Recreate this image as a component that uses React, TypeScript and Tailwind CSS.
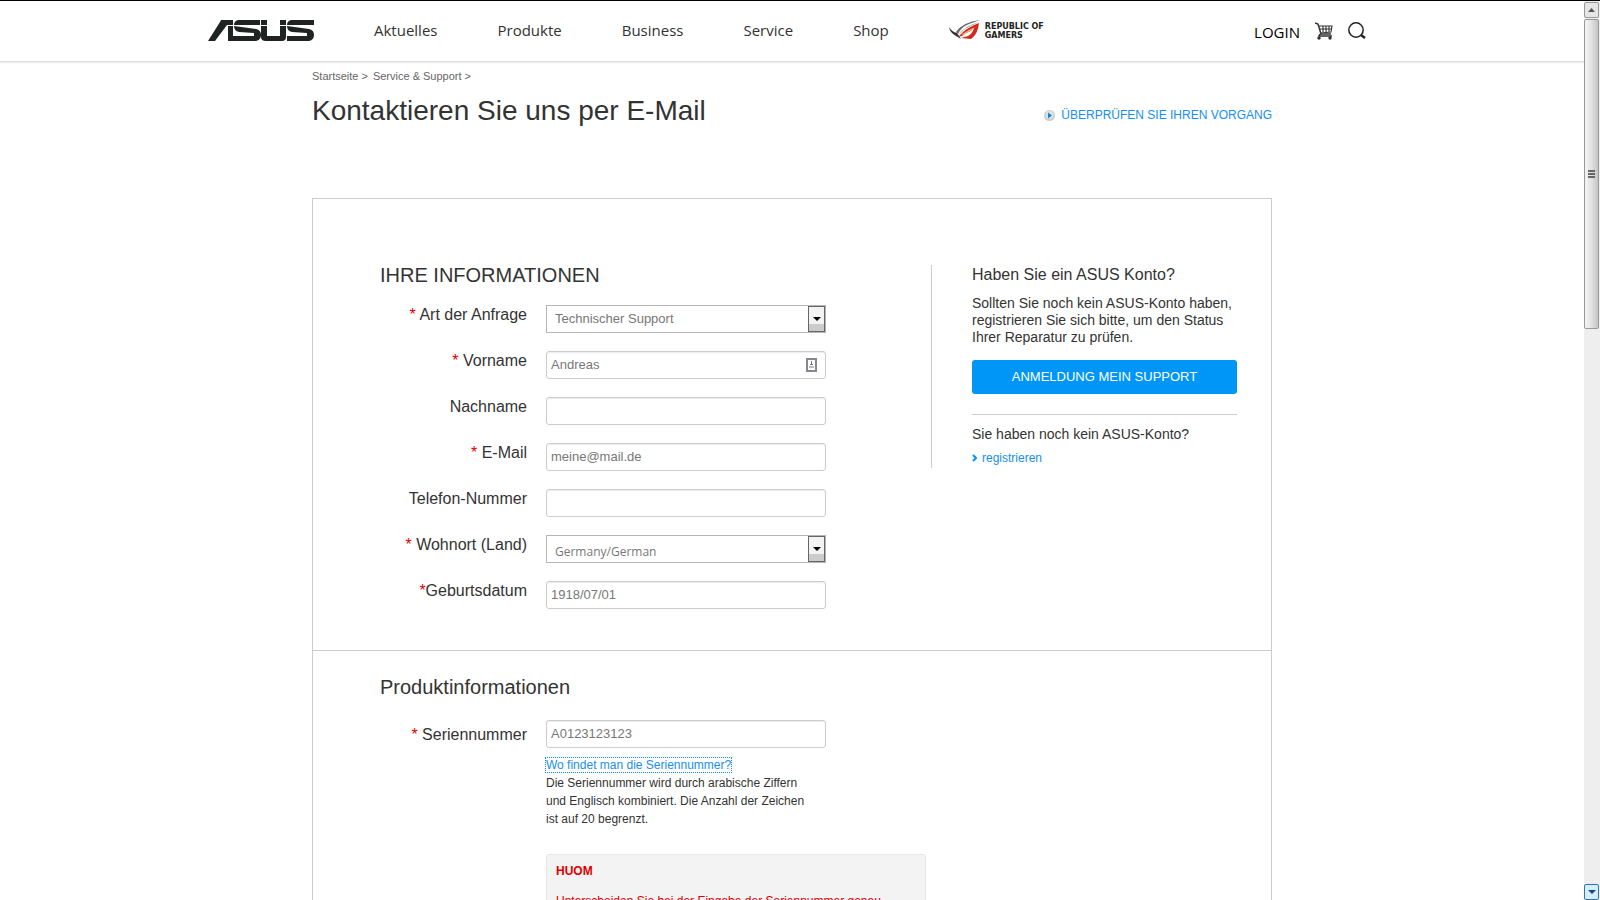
import type { ReactNode } from 'react';

const navLinks = ['Aktuelles', 'Produkte', 'Business', 'Service', 'Shop'];

const AsusLogo = () => (
  <svg width="106" height="21" viewBox="0 0 106 21" fill="#1f2322" role="img" aria-label="ASUS">
    <path d="M13 0H25V5H19L7 21H0L12 2Z" />
    <path d="M20 6H25V21H20Z" />
    <path d="M30 0H52V5H26Q26 1 30 0Z" />
    <path d="M26 6L48 9Q53 10 53 15Q53 20 48 21H25V16H46V13L31 12Q26 11 26 6Z" />
    <path d="M53 0H59V5H53ZM53 6H59V16H72V6H78V17Q78 21 74 21H58Q53 21 53 17Z" />
    <path d="M72 0H78V5H72Z" />
    <path d="M83 0H106V5H79Q79 1 83 0Z" />
    <path d="M79 6L101 9Q106 10 106 15Q106 20 101 21H79V16H99V13L84 12Q79 11 79 6Z" />
  </svg>
);

const RogLogo = () => (
  <svg width="32" height="21" viewBox="0 0 32 21" aria-hidden="true">
    <path d="M0 7Q3 12 8 13L12 19L7 16Q1 13 0 7Z" fill="#333" />
    <path d="M7 12Q14 2 31 0L20 4Q12 7 9 14Z" fill="#666" />
    <path d="M9 15Q15 6 30 2L16 9Z" fill="#aaa" />
    <path d="M9 17Q18 7 30 3Q29 14 22 19L12 18L19 16Q24 13 25 8Q18 10 13 16Z" fill="#d3281c" />
    <path d="M13 14L26 7L22 11L14 15Z" fill="#e8a06a" />
  </svg>
);

const CartIcon = () => (
  <svg width="18" height="18" viewBox="0 0 18 18" fill="none" stroke="#333" aria-hidden="true">
    <path d="M0 1L3 2L6 12H16M5 12L4 14H17" strokeWidth="1.5" />
    <path d="M4 4H17L16 10L6 11M5 7H16M8 4V10M11 4V10M14 4V10" strokeWidth="1.1" />
    <circle cx="4" cy="16" r="1.7" fill="#333" stroke="none" />
    <circle cx="15" cy="16" r="1.7" fill="#333" stroke="none" />
  </svg>
);

const SearchIcon = () => (
  <svg width="18" height="18" viewBox="0 0 18 18" fill="none" stroke="#222" aria-hidden="true">
    <circle cx="8" cy="8" r="7.2" strokeWidth="1.5" />
    <path d="M13 13L17 16" strokeWidth="2.5" />
  </svg>
);

const labelClasses = 'w-[147px] shrink-0 text-right text-base leading-5';
const inputClasses =
  'block h-7 w-[280px] rounded-[3px] border border-[#ccc] px-1 pb-0.5 text-[13px] text-[#777] shadow-[inset_0_1px_1px_rgba(0,0,0,0.08)] outline-none';

type RowProps = {
  id: string;
  label: string;
  required?: boolean;
  tight?: boolean;
  low?: boolean;
  children: ReactNode;
};

const Row = ({ id, label, required, tight, low, children }: RowProps) => (
  <div className="flex gap-[19px]">
    <label htmlFor={id} className={`${labelClasses} ${low ? 'pt-[5px]' : ''}`}>
      {required && <span className="text-[#d00]">*{tight ? '' : ' '}</span>}
      {label}
    </label>
    {children}
  </div>
);

const Select = ({ id, option, className }: { id: string; option: string; className: string }) => (
  <div className="relative h-7 w-[280px]">
    <select
      id={id}
      className={`block h-7 w-full appearance-none border border-[#b5b5b5] bg-white px-2 text-[#777] outline-none ${className}`}
    >
      <option>{option}</option>
    </select>
    <span className="pointer-events-none absolute top-px right-px flex h-[26px] w-[17px] items-center justify-center border border-[#666] bg-linear-to-b from-[#f3f3f3] from-70% to-[#ccc] to-70%">
      <svg width="8" height="4" viewBox="0 0 8 4" aria-hidden="true">
        <path d="M0 0H8L4 4Z" />
      </svg>
    </span>
  </div>
);

const Header = () => (
  <header className="h-[62px] border-t border-b border-t-black border-b-[#ddd] shadow-[0_1px_1px_#eee]">
    <div className="mx-auto flex h-[59px] w-full max-w-[1168px] items-center font-['Open_Sans',sans-serif] text-[15px]">
      <a href="#" className="mr-[60px]">
        <AsusLogo />
      </a>
      <nav className="flex items-center gap-[60px]">
        {navLinks.map((link) => (
          <a key={link} href="#">
            {link}
          </a>
        ))}
        <a href="#" className="flex items-center gap-1">
          <RogLogo />
          <span className="font-['DejaVu_Sans',sans-serif] text-[8px] leading-[9px] font-bold text-[#222]">
            REPUBLIC OF
            <br />
            GAMERS
          </span>
        </a>
      </nav>
      <div className="mr-[10px] ml-auto flex items-center gap-[15px]">
        <a href="#" className="pt-[3px] text-black">
          LOGIN
        </a>
        <a href="#" aria-label="Warenkorb">
          <CartIcon />
        </a>
        <button type="button" aria-label="Suche">
          <SearchIcon />
        </button>
      </div>
    </div>
  </header>
);

const AccountPanel = () => (
  <aside className="mt-[66px] h-[203px] w-[306px] border-l border-[#ccc] pl-10">
    <h2 className="text-base leading-5">Haben Sie ein ASUS Konto?</h2>
    <p className="mt-[10px] text-sm leading-[17px]">
      Sollten Sie noch kein ASUS-Konto haben,
      <br />
      registrieren Sie sich bitte, um den Status
      <br />
      Ihrer Reparatur zu prüfen.
    </p>
    <button type="button" className="mt-[14px] h-[34px] w-full rounded-[3px] bg-[#0096f7] text-[13px] text-white">
      ANMELDUNG MEIN SUPPORT
    </button>
    <p className="mt-5 border-t border-[#ccc] pt-[9px] text-sm leading-5">Sie haben noch kein ASUS-Konto?</p>
    <a href="#" className="mt-[6px] flex items-center gap-[5px] text-xs leading-4 text-[#1590ee]">
      <svg width="5" height="8" viewBox="0 0 5 8" fill="none" stroke="#0096f7" strokeWidth="2" aria-hidden="true">
        <path d="M1 1L4 4L1 7" />
      </svg>
      registrieren
    </a>
  </aside>
);

const Scrollbar = () => (
  <div className="flex w-4 shrink-0 flex-col border-t border-black bg-[#eee] pt-px pr-px" aria-hidden="true">
    <div className="flex h-4 items-center justify-center rounded-xs border border-[#999] bg-[#e5e5e5]">
      <svg width="7" height="4" viewBox="0 0 7 4" fill="#555">
        <path d="M0 4L3.5 0L7 4Z" />
      </svg>
    </div>
    <div className="mt-px flex h-[310px] flex-col items-center justify-center gap-px rounded-xs border border-[#999] bg-linear-to-r from-[#f5f5f5] via-[#e4e4e4] via-45% to-[#c4c4c4]">
      <span className="h-0.5 w-[7px] bg-[#666]" />
      <span className="h-0.5 w-[7px] bg-[#666]" />
      <span className="h-0.5 w-[7px] bg-[#666]" />
    </div>
    <div className="mt-auto flex h-4 items-center justify-center rounded-xs border border-[#3372b8] bg-[#d3effc]">
      <svg width="8" height="4" viewBox="0 0 8 4" fill="#1d4577">
        <path d="M0 0H8L4 4Z" />
      </svg>
    </div>
  </div>
);

export default function App() {
  return (
    <div className="flex h-screen overflow-hidden bg-white font-['Liberation_Sans',Arial,sans-serif] text-[#333]">
      <div className="min-w-0 flex-1 overflow-hidden">
        <Header />
        <main className="mx-auto w-full max-w-[960px]">
          <nav className="flex gap-[3px] pt-[7px] text-[11px] leading-[14px] text-[#666]">
            <a href="#">Startseite</a>
            <span>&gt;</span>
            <a href="#" className="ml-0.5">
              Service &amp; Support
            </a>
            <span>&gt;</span>
          </nav>
          <div className="mt-3 flex items-center justify-between">
            <h1 className="text-[28px] leading-8">Kontaktieren Sie uns per E-Mail</h1>
            <a href="#" className="flex items-center gap-[6px] pt-2 text-xs text-[#1590ee]">
              <svg width="11" height="11" viewBox="0 0 11 11" aria-hidden="true">
                <circle cx="5.5" cy="5.5" r="5.5" fill="#ccc" />
                <circle cx="5.5" cy="5" r="4" fill="#e2e2e2" />
                <path d="M4 2.5L8 5.5L4 8.5Z" fill="#0788dd" />
              </svg>
              ÜBERPRÜFEN SIE IHREN VORGANG
            </a>
          </div>

          <form className="mt-[71px] border border-[#ccc]">
            <section className="flex justify-between border-b border-[#ccc] pr-[34px] pb-[41px] pl-[67px]">
              <div className="pt-[66px]">
                <h2 className="text-xl leading-5">IHRE INFORMATIONEN</h2>
                <div className="mt-5 flex flex-col gap-[18px]">
                  <Row id="art" label="Art der Anfrage" required>
                    <Select id="art" option="Technischer Support" className="text-[13px]" />
                  </Row>
                  <Row id="vorname" label="Vorname" required>
                    <div className="relative">
                      <input id="vorname" defaultValue="Andreas" className={inputClasses} />
                      <svg
                        className="absolute top-[7px] right-[9px]"
                        width="11"
                        height="14"
                        viewBox="0 0 11 14"
                        aria-hidden="true"
                      >
                        <rect x="1" y="1" width="9" height="12" fill="#fff" stroke="#8a8690" strokeWidth="2" />
                        <path d="M5 3H6V6H7V7H4V6H5Z" fill="#777" />
                        <path d="M3 8H8V10H3Z" fill="#bbb" />
                      </svg>
                    </div>
                  </Row>
                  <Row id="nachname" label="Nachname">
                    <input id="nachname" className={inputClasses} />
                  </Row>
                  <Row id="email" label="E-Mail" required>
                    <input id="email" type="email" defaultValue="meine@mail.de" className={inputClasses} />
                  </Row>
                  <Row id="telefon" label="Telefon-Nummer">
                    <input id="telefon" type="tel" className={inputClasses} />
                  </Row>
                  <Row id="land" label="Wohnort (Land)" required>
                    <Select id="land" option="Germany/German" className="pt-1.5 font-['Open_Sans',sans-serif] text-xs" />
                  </Row>
                  <Row id="geburtsdatum" label="Geburtsdatum" required tight>
                    <input id="geburtsdatum" defaultValue="1918/07/01" className={inputClasses} />
                  </Row>
                </div>
              </div>
              <AccountPanel />
            </section>

            <section className="pt-[26px] pr-[34px] pb-10 pl-[67px]">
              <h2 className="text-xl leading-5">Produktinformationen</h2>
              <div className="mt-[23px]">
                <Row id="serien" label="Seriennummer" required low>
                  <input id="serien" defaultValue="A0123123123" className={inputClasses} />
                </Row>
              </div>
              <div className="ml-[166px] pt-2 text-xs leading-[18px]">
                <a href="#" className="text-[#1590ee] outline-1 outline-[#1590ee] outline-dotted">
                  Wo findet man die Seriennummer?
                </a>
                <p className="w-[266px]">
                  Die Seriennummer wird durch arabische Ziffern und Englisch kombiniert. Die Anzahl der Zeichen ist auf
                  20 begrenzt.
                </p>
                <div className="mt-[26px] w-[380px] rounded-[3px] border border-[#e8e8e8] bg-[#f3f3f3] px-[9px] py-[7px] text-[#d00]">
                  <strong>HUOM</strong>
                  <p className="mt-3">Unterscheiden Sie bei der Eingabe der Seriennummer genau</p>
                </div>
              </div>
            </section>
          </form>
        </main>
      </div>
      <Scrollbar />
    </div>
  );
}
